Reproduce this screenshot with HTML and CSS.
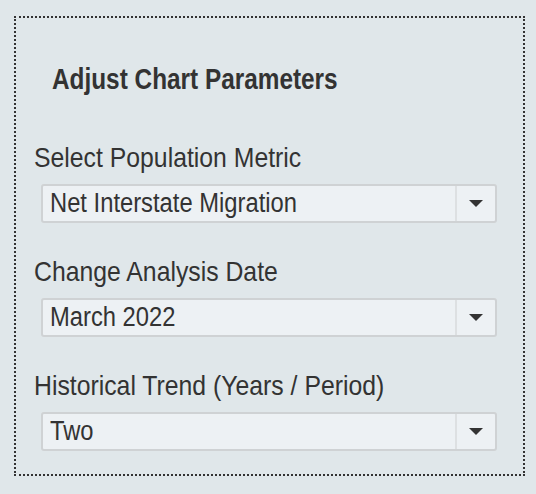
FILE: index.html
```html
<!DOCTYPE html>
<html>
<head>
<meta charset="utf-8">
<link rel="stylesheet" href="styles.css">
</head>
<body>
<div class="panel">
  <h2 class="title"><span class="txt">Adjust Chart Parameters</span></h2>
  <div class="field">
    <div class="label"><span class="txt">Select Population Metric</span></div>
    <div class="select"><span class="value"><span class="txt">Net Interstate Migration</span></span><span class="arrow"></span></div>
  </div>
  <div class="field">
    <div class="label"><span class="txt">Change Analysis Date</span></div>
    <div class="select"><span class="value"><span class="txt">March 2022</span></span><span class="arrow"></span></div>
  </div>
  <div class="field">
    <div class="label"><span class="txt">Historical Trend (Years / Period)</span></div>
    <div class="select"><span class="value"><span class="txt">Two</span></span><span class="arrow"></span></div>
  </div>
</div>
</body>
</html>
```
FILE: styles.css
```css
html, body {
  margin: 0;
  background: #e0e7ea;
}
body {
  padding: 16px 11px 0 14px;
  font-family: "Liberation Sans", Arial, sans-serif;
  color: #333;
}
.panel {
  border: 2px dotted #333;
  height: 456px;
  padding: 0 26px 0 18px;
}
.txt {
  display: inline-block;
  white-space: nowrap;
  transform-origin: 0 50%;
}
.title {
  margin: 45px 0 0 18px;
  font-size: 29px;
  font-weight: 700;
  line-height: 32px;
  color: #333;
}
.title .txt {
  transform: scaleX(0.84);
}
.field {
  margin-top: 47px;
}
.field + .field {
  margin-top: 33px;
}
.label {
  font-size: 28px;
  line-height: 32px;
  margin-bottom: 10px;
  white-space: nowrap;
}
.label .txt {
  transform: scaleX(0.885);
}
.select {
  margin-left: 7px;
  height: 35px;
  border: 2px solid #cfd2d4;
  border-radius: 3px;
  background: #edf1f4;
  display: flex;
  align-items: center;
}
.value {
  flex: 1;
  padding-left: 7px;
  font-size: 27px;
}
.value .txt {
  transform: scaleX(0.88);
}
.arrow {
  width: 38px;
  height: 100%;
  border-left: 2px solid #dde0e2;
  display: flex;
  align-items: center;
  justify-content: center;
}
.arrow::after {
  content: "";
  border-left: 7px solid transparent;
  border-right: 7px solid transparent;
  border-top: 7px solid #333;
}
```
